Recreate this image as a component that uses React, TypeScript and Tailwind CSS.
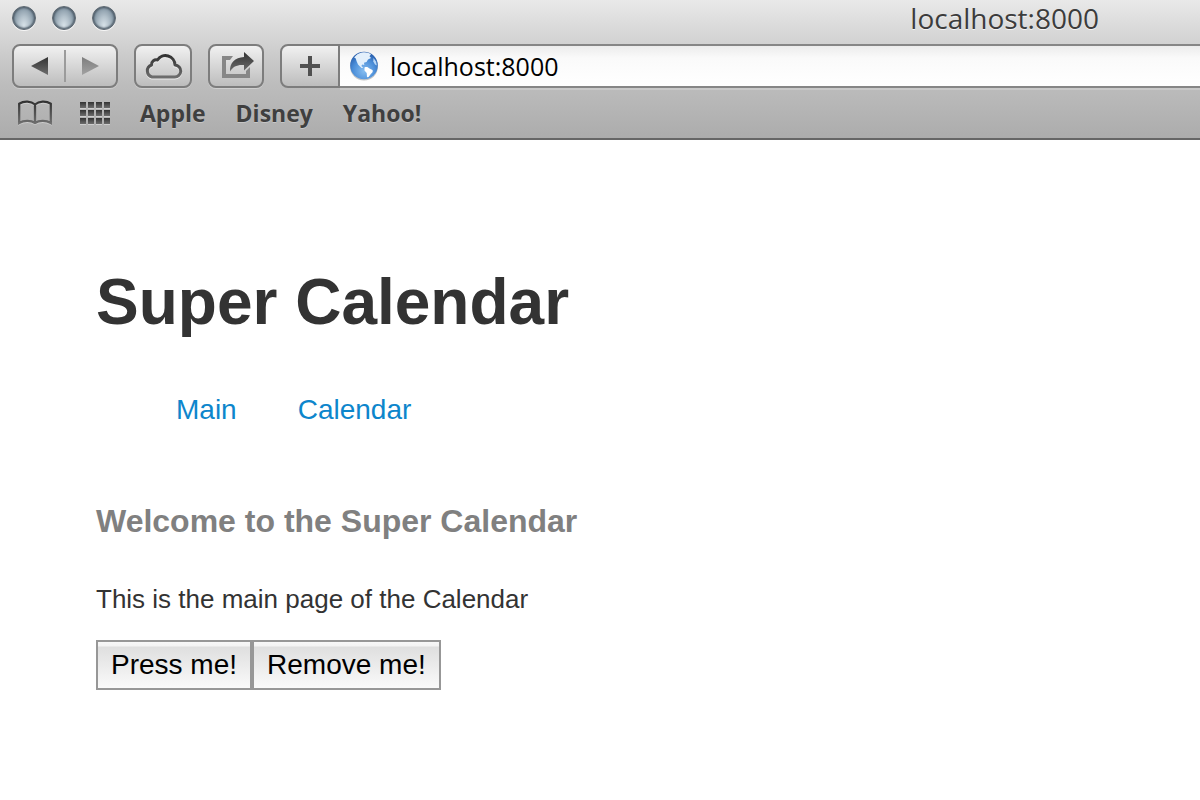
import React from "react";

const toolButton =
  "flex h-11 items-center justify-center rounded-lg border-2 border-[#7d7d7d] bg-linear-to-b from-[#f1f1f1] to-[#bdbdbd] shadow-[0_1px_0_#cfcfcf]";

function TrafficLight({ label }: { label: string }) {
  return (
    <button
      type="button"
      aria-label={label}
      className="size-6 rounded-full border border-[#5b6670] bg-[radial-gradient(ellipse_at_50%_85%,#d9e3e9_0%,#b3c1cb_35%,#8597a5_70%,#5d6d7a_100%)] shadow-[inset_0_0_2px_1px_#4c5a66,0_1px_0_#f6f6f6]"
    />
  );
}

function Defs() {
  return (
    <defs>
      <linearGradient id="ink" x1="0" y1="0" x2="0" y2="1">
        <stop offset="0" stopColor="#333" />
        <stop offset="1" stopColor="#6d6d6d" />
      </linearGradient>
      <linearGradient id="pale" x1="0" y1="0" x2="0" y2="1">
        <stop offset="0" stopColor="#7d7d7d" />
        <stop offset="1" stopColor="#a2a2a2" />
      </linearGradient>
      <radialGradient id="sea" cx="0.5" cy="0.7" r="0.75">
        <stop offset="0" stopColor="#86bdf0" />
        <stop offset="0.55" stopColor="#4a8dd8" />
        <stop offset="1" stopColor="#1d4f9f" />
      </radialGradient>
    </defs>
  );
}

const cloudPath =
  "M9 25H31.5a6 6 0 0 0 .5-12 9.500 9.500 0 0 0-17.500-5 4.800 4.800 0 0 0-6 5A6.300 6.300 0 0 0 9 25Z";

function CloudIcon() {
  return (
    <svg width="40" height="28" viewBox="0 0 40 28" fill="none" aria-hidden="true">
      <Defs />
      <path d={cloudPath} stroke="#ececec" strokeWidth="3" transform="translate(0 1)" />
      <path d={cloudPath} stroke="url(#ink)" strokeWidth="3" strokeLinejoin="round" />
    </svg>
  );
}

function ShareIcon() {
  return (
    <svg width="36" height="28" viewBox="0 0 36 28" aria-hidden="true">
      <path d="M4 4h11l-3 4H8v14h20v-3l4-4v11H4Z" fill="#878787" />
      <path d="M26 0 36 9 26 18.500V13C19 12.500 15 14.500 12 19.500 11.500 11 17 5.500 26 5Z" fill="url(#ink)" />
    </svg>
  );
}

function GlobeIcon() {
  return (
    <svg width="30" height="30" viewBox="0 0 30 30" aria-hidden="true">
      <circle cx="15" cy="15.500" r="14" fill="#8d8d8d" opacity="0.5" />
      <circle cx="15" cy="14.500" r="13.800" fill="url(#sea)" />
      <path
        d="M6.500 5C9 2.500 12 1.400 15 1.300c3 0 5.500.8 7 2l-1.500 2 1.500 1.700-3 1.500-1.500 2.500-2.500.8.3 2.200-2-.5-1 1.500 2 1.800-1.800.2-3.500-3.500L7.500 10 6.800 7.500 5.200 6.500Z"
        fill="#e3f0fc"
      />
      <path
        d="M15.500 16.500c1.500-.8 3.500-.5 4.500.8l3.500 1.700c.8 1.500-.3 3-1.500 3.800L19.500 26l-1.500.2-.3-4.200-2.200-2.500Z"
        fill="#fff"
      />
      <path d="M24.500 7l2.500 3.500.8 4-1.800-1-1.700-3Z" fill="#b9d8f6" />
    </svg>
  );
}

const bookPath = "M18 5.500C14 2 7 1.700 2.200 4.800V24c4.800-2.800 11.800-2.600 15.800 0 4-2.600 11-2.800 15.800 0V4.800C29 1.700 22 2 18 5.500ZM18 5.500V24";

function BookIcon() {
  return (
    <svg width="36" height="28" viewBox="0 0 36 28" fill="none" aria-hidden="true">
      <path d={bookPath} stroke="#cdcdcd" strokeWidth="2" transform="translate(0 1)" />
      <path d={bookPath} stroke="url(#ink)" strokeWidth="2.300" />
    </svg>
  );
}

function GridIcon() {
  const cols = [0, 8, 16, 24];
  const rows = [1, 9, 17];
  return (
    <svg width="30" height="24" viewBox="0 0 30 24" aria-hidden="true">
      {rows.map((y) =>
        cols.map((x) => (
          <g key={`${x}-${y}`}>
            <rect x={x} y={y + 1} width="6" height="6" fill="#cdcdcd" />
            <rect x={x} y={y} width="6" height="6" fill="url(#ink)" />
          </g>
        )),
      )}
    </svg>
  );
}

function BrowserChrome() {
  return (
    <header className="border-b-2 border-[#666] bg-linear-to-b from-[#e9e9e9] via-[#bdbdbd] via-60% to-[#acacac] font-['Open_Sans','Noto_Sans',sans-serif]">
      <div className="flex h-11 items-start px-3 pt-1.5">
        <div className="flex gap-4">
          <TrafficLight label="Close" />
          <TrafficLight label="Minimize" />
          <TrafficLight label="Zoom" />
        </div>
        <div className="ml-auto pr-[89px] text-[28px] leading-6 text-[#3c3c3c] [text-shadow:0_1px_0_#f4f4f4]">
          localhost:8000
        </div>
      </div>

      <div className="flex gap-4 pl-3">
        <div className={`${toolButton} w-[106px]`}>
          <button type="button" aria-label="Back" className="flex h-full flex-1 items-center justify-center">
            <svg width="18" height="18" viewBox="0 0 18 18" aria-hidden="true">
              <path d="M18 0v18L1 9Z" fill="url(#ink)" />
            </svg>
          </button>
          <span className="h-8 w-0.5 bg-[#9b9b9b]" />
          <button type="button" aria-label="Forward" className="flex h-full flex-1 items-center justify-center">
            <svg width="18" height="18" viewBox="0 0 18 18" aria-hidden="true">
              <path d="M0 0v18L17 9Z" fill="url(#pale)" />
            </svg>
          </button>
        </div>
        <button type="button" aria-label="iCloud tabs" className={`${toolButton} w-[58px]`}>
          <CloudIcon />
        </button>
        <button type="button" aria-label="Share" className={`${toolButton} w-14`}>
          <ShareIcon />
        </button>
        <div className="flex flex-1">
          <button
            type="button"
            aria-label="Add bookmark"
            className="flex h-11 w-[60px] items-center justify-center rounded-l-lg border-2 border-[#7d7d7d] bg-linear-to-b from-[#f1f1f1] to-[#bdbdbd]"
          >
            <svg width="20" height="20" viewBox="0 0 20 20" aria-hidden="true">
              <path d="M8 0h4v8h8v4h-8v8H8v-8H0V8h8Z" fill="#505050" />
            </svg>
          </button>
          <div className="flex h-11 flex-1 items-center gap-[11px] border-y-2 border-[#868686] bg-linear-to-b from-[#ececec] via-[#fafafa] via-30% to-white pl-[9px] shadow-[0_2px_0_#c9c9c9]">
            <GlobeIcon />
            <input
              type="text"
              aria-label="Address"
              defaultValue="localhost:8000"
              className="min-w-0 flex-1 bg-transparent text-[25px] leading-8 text-black outline-none"
            />
          </div>
        </div>
      </div>

      <nav
        aria-label="Bookmarks"
        className="flex h-[50px] items-center pl-[17px] text-[23px] leading-8 font-bold text-[#3f3f3f] [text-shadow:0_1px_0_#c6c6c6]"
      >
        <button type="button" aria-label="Show bookmarks">
          <BookIcon />
        </button>
        <button type="button" aria-label="Top sites" className="ml-[27px]">
          <GridIcon />
        </button>
        <div className="ml-[30px] flex gap-[30px]">
          <a href="#apple">Apple</a>
          <a href="#disney">Disney</a>
          <a href="#yahoo">Yahoo!</a>
        </div>
      </nav>
    </header>
  );
}

const pageButton =
  "h-[50px] border-2 border-[#979797] bg-[linear-gradient(to_bottom,#f8f8f8_0,#f3f3f3_4px,#dfdfdf_5px,#fafafa_100%)] px-[13px] text-[28px] leading-8 text-black";

export default function App() {
  return (
    <div className="min-h-screen overflow-hidden bg-white">
      <BrowserChrome />
      <main className="px-24 pt-[122px] pb-24 font-['Liberation_Sans',Arial,sans-serif] text-[#333]">
        <h1 className="text-[64px] leading-20 font-bold">Super Calendar</h1>
        <nav aria-label="Pages" className="mt-12 flex gap-[61px] pl-20 text-[28px] leading-10 text-[#0d86cc]">
          <a href="#main">Main</a>
          <a href="#calendar">Calendar</a>
        </nav>
        <h2 className="mt-[71px] text-[32px] leading-10 font-bold text-[#808080]">Welcome to the Super Calendar</h2>
        <p className="mt-[38px] text-[26px] leading-10">This is the main page of the Calendar</p>
        <div className="mt-[21px] flex">
          <button type="button" className={pageButton}>Press me!</button>
          <button type="button" className={pageButton}>Remove me!</button>
        </div>
      </main>
    </div>
  );
}
